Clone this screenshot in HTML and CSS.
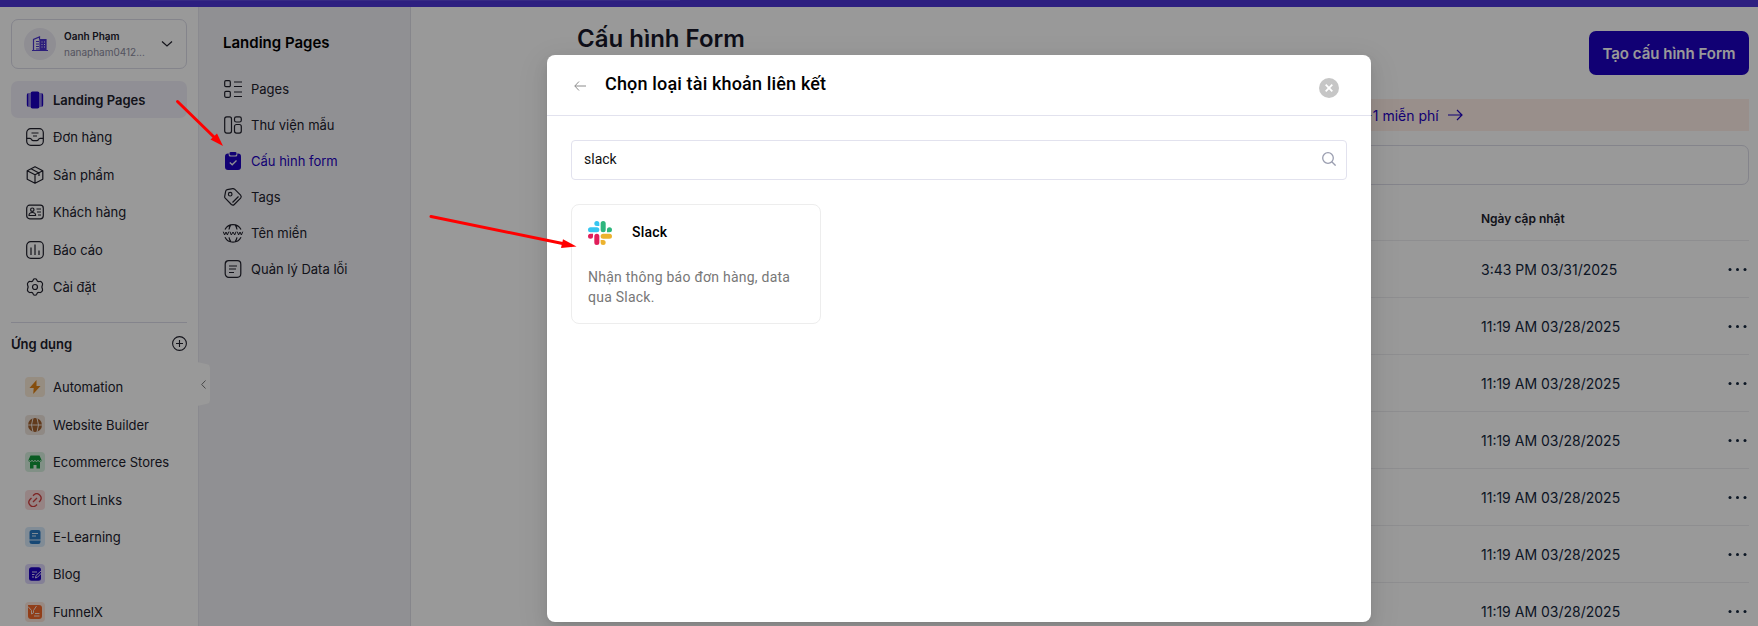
FILE: index.html
```html
<!DOCTYPE html>
<html lang="vi">
<head>
<meta charset="utf-8">
<title>Cấu hình Form</title>
<link rel="stylesheet" href="styles.css">
</head>
<body>
<div class="app">
  <div class="topbar"><div class="topbar-progress"></div></div>
  <div class="layout">
    <aside class="sidebar">
      <div class="account">
        <div class="avatar">
          <svg width="16" height="16" viewBox="0 0 16 16" fill="none" stroke="#4b35cf" stroke-width="1.2"><path d="M0 14.500h16M1.500 14.500V3.500L7.500 1v2.500M4 5.500h3M4 8h3M4 10.500h3M4 13h3"/><path d="M8 3.500h6v11H8z" fill="#4b35cf"/><path d="M9.500 6h1M12 6h1M9.500 8.500h1M12 8.500h1M9.500 11h1M12 11h1" stroke="#eeeafc"/></svg>
        </div>
        <div class="account-text"><b>Oanh Phạm</b><span>nanapham0412...</span></div>
        <svg class="chev" width="12" height="8" viewBox="0 0 12 8" fill="none" stroke="#20202c" stroke-width="1.200"><path d="M1 1.500l5 4.500 5-4.500"/></svg>
      </div>
      <nav class="menu">
        <a class="item active"><svg class="ic" viewBox="0 0 18 18" fill="#1d00c1"><rect x="4.500" y="0.500" width="9" height="17" rx="2"/><path d="M3.500 2v14C1.500 16 .8 15.200 .8 13.500v-9C.8 2.800 1.500 2 3.500 2zM14.500 2v14c2 0 2.700-.8 2.700-2.500v-9c0-1.700-.7-2.500-2.700-2.500z"/><path d="M2.700 2v14M15.300 2v14" stroke="#eeebfa" stroke-width=".5"/></svg>Landing Pages</a>
        <a class="item"><svg class="ic line" viewBox="0 0 18 18"><rect x=".7" y=".7" width="16.600" height="16.600" rx="4"/><path d="M.7 10.300h3.200c1 0 1.300.5 1.700 1.300.4.700.8 1 1.700 1h3.400c.9 0 1.300-.3 1.700-1 .4-.8.700-1.300 1.700-1.300h3.200M5.500 5h7M7 8h4"/></svg>Đơn hàng</a>
        <a class="item"><svg class="ic line" viewBox="0 0 18 18"><path d="M9 .7l7.800 4v8.600L9 17.300l-7.800-4V4.700zM1.200 4.700L9 8.800l7.800-4.100M9 8.800v8.500M5 2.800l8 4.200v3"/></svg>Sản phẩm</a>
        <a class="item"><svg class="ic line" viewBox="0 0 18 18"><rect x=".7" y="2.200" width="16.600" height="13.600" rx="3"/><circle cx="6.300" cy="6.700" r="1.700"/><path d="M3 12.500c0-2.300 1.300-3 3.300-3s3.300.7 3.300 3zM10.500 6h4.500M11 9h4M12 12h3"/></svg>Khách hàng</a>
        <a class="item"><svg class="ic line" viewBox="0 0 18 18"><rect x=".7" y=".7" width="16.600" height="16.600" rx="4"/><path d="M5 6.500V14M9 3.500V14M13 9.500V14"/></svg>Báo cáo</a>
        <a class="item"><svg class="ic line" viewBox="0 0 18 18"><path d="M7.300 1.800c.5-1.400 2.900-1.400 3.400 0 .4 1.400 1.500 2 2.900 1.700 1.500-.4 3.400 1.600 2.900 3.100-.9 1.700-.9 3.100 0 4.800.5 1.500-1.400 3.500-2.900 3.100-1.400-.3-2.500.3-2.900 1.700-.5 1.400-2.900 1.400-3.400 0-.4-1.400-1.500-2-2.900-1.700-1.500.4-3.400-1.600-2.900-3.100.9-1.700.9-3.100 0-4.800C1 5.100 2.900 3.100 4.400 3.500c1.400.3 2.500-.3 2.900-1.700z"/><circle cx="9" cy="9" r="2.500"/></svg>Cài đặt</a>
      </nav>
      <div class="apps-head"><b>Ứng dụng</b>
        <svg width="15" height="15" viewBox="0 0 15 15" fill="none" stroke="#20202c" stroke-width="1.100"><circle cx="7.500" cy="7.500" r="6.900"/><path d="M7.500 4v7M4 7.500h7"/></svg>
      </div>
      <nav class="menu apps">
        <a class="item"><span class="tile amber"><svg viewBox="0 0 14 14"><path d="M8.500 0L1.500 8h4.200L5.200 14l7.300-8H8.500z" fill="#e08214"/></svg></span>Automation</a>
        <a class="item"><span class="tile brown"><svg viewBox="0 0 14 14"><circle cx="7" cy="7" r="7" fill="#a2612f"/><path d="M0 7h14M5 0q-3 7 0 14M9 0q3 7 0 14" stroke="#efe5dd" fill="none"/></svg></span>Website Builder</a>
        <a class="item"><span class="tile green"><svg viewBox="0 0 14 14"><path d="M2.500.5h9L13.500 5c0 1-.5 2-1.500 2v6.500H8.500V10h-3v3.500H2V7C1 7 .5 6 .5 5z" fill="#119a3b"/><path d="M1 5.500q1.500 2 3 0 1.500 2 3 0 1.500 2 3 0 1.500 2 3 0" stroke="#d8f0df" fill="none"/></svg></span>Ecommerce Stores</a>
        <a class="item"><span class="tile red"><svg viewBox="0 0 14 14" fill="none" stroke="#d03e3e" stroke-width="1.300"><path d="M5 9l4-4M5 2.800l1-1C9.500-1.500 15.500 3.500 12 8l-1 1M3.500 5L2 6.500c-3.500 4 2 9.500 6 6l1-1"/></svg></span>Short Links</a>
        <a class="item"><span class="tile blue"><svg viewBox="0 0 14 14"><path d="M1.500 2.500Q1.500 0 4 0h6.500q2 0 2 2v7.500h-11zM1.500 10.500h11v1.200q0 2.300-2 2.300H4q-2.500 0-2.500-2z" fill="#2779c4"/><path d="M4 3.500h6M4 6h4" stroke="#d8eafa"/></svg></span>E-Learning</a>
        <a class="item"><span class="tile violet"><svg viewBox="0 0 14 14"><rect x="1" y=".3" width="12" height="13.500" rx="2.500" fill="#1d00c1"/><path d="M4 5h5M4 7.500h2.500M4 10h2M7.500 11l.5-2.500L13 4l1 1.500-4.500 4.700z" stroke="#dcd6fa" fill="none"/></svg></span>Blog</a>
        <a class="item"><span class="tile orange"><svg viewBox="0 0 14 14"><path d="M0 0h11q3 0 3 3v8q0 3-3 3H3q-3 0-3-3z" fill="#f2682a"/><path d="M0 1.500l3.500 4V9l2-1.200V5.500L8.500 1M7 8.500h4.500M6 11h5.500" stroke="#fde6da" fill="none"/></svg></span>FunnelX</a>
      </nav>
      <div class="collapse"><svg width="5" height="9" viewBox="0 0 5 9" fill="none" stroke="#777" stroke-width="1"><path d="M4.500.5L.7 4.500l3.800 4"/></svg></div>
    </aside>
    <aside class="panel">
      <h2>Landing Pages</h2>
      <a class="sub"><svg class="ic line" viewBox="0 0 18 18"><rect x=".7" y=".7" width="5.600" height="6" rx="1.200"/><rect x=".7" y="11.300" width="5.600" height="6" rx="1.200"/><path d="M10 2h8M10 6.500h8M10 12h8M10 16.500h8"/></svg>Pages</a>
      <a class="sub"><svg class="ic line" viewBox="0 0 18 18"><rect x=".7" y=".9" width="6.800" height="16.200" rx="2"/><rect x="10.500" y=".9" width="6.800" height="5.100" rx="1.800"/><rect x="10.500" y="8.500" width="6.800" height="8.600" rx="2"/></svg>Thư viện mẫu</a>
      <a class="sub current"><svg class="ic" viewBox="0 0 18 18"><rect x="1" y="1.500" width="16" height="16.500" rx="3" fill="#1d00c1"/><rect x="4.700" y="-.5" width="8.600" height="5" rx="1.500" fill="#f1f1f5"/><rect x="5.500" y="0" width="7" height="3.400" rx="1.300" fill="#1d00c1"/><path d="M5.800 10.500l2.400 2.300 4.300-4.300" fill="none" stroke="#f1f1f5" stroke-width="1.300"/></svg>Cấu hình form</a>
      <a class="sub"><svg class="ic line" viewBox="0 0 18 18"><path d="M3.200 1.600l5.600-1q1-.1 1.800.6l6 6q1.300 1.500 0 2.900l-6.300 6.400q-1.400 1.300-2.900 0L1.200 10.200q-.7-.8-.5-1.800l1-5.300q.3-1.200 1.500-1.500z"/><circle cx="6.200" cy="6.200" r="1.800"/><path d="M8.500 14.500l6-6"/></svg>Tags</a>
      <a class="sub"><svg class="ic line" viewBox="0 0 18 18"><path d="M1 5.500a9 9 0 0 1 16 0M1 13.300a9 9 0 0 0 16 0M6.800.9Q5.500 2.800 5 5.500M11.200.9q1.300 1.900 1.800 4.600M5 13.300q.5 2.600 1.800 4.300M13 13.300q-.5 2.600-1.800 4.300"/><path stroke-width="1" d="M-.7 7.700L.6 11 2 8l1.400 3 1.300-3.300M6 7.700L7.300 11 9 8l1.700 3L12 7.700M13.300 7.700l1.300 3.300L16 8l1.400 3 1.300-3.300"/></svg>Tên miền</a>
      <a class="sub"><svg class="ic line" viewBox="0 0 18 18"><rect x="1.200" y=".7" width="15.600" height="16.600" rx="3.500"/><path d="M5 6h8M5 9h7M5 12.500h5"/></svg>Quản lý Data lỗi</a>
    </aside>
    <main class="main">
      <header class="page-head"><h1>Cấu hình Form</h1><button class="primary">Tạo cấu hình Form</button></header>
      <div class="banner"><span>+1 miễn phí</span><svg width="15" height="12" viewBox="0 0 15 12" fill="none" stroke="#1d00c1" stroke-width="1.200"><path d="M0 6h14M9 1l5 5-5 5"/></svg></div>
      <div class="filter"></div>
      <div class="table">
        <div class="row head"><span>Ngày cập nhật</span></div>
        <div class="row"><span>3:43 PM 03/31/2025</span><i class="dots"></i></div>
        <div class="row"><span>11:19 AM 03/28/2025</span><i class="dots"></i></div>
        <div class="row"><span>11:19 AM 03/28/2025</span><i class="dots"></i></div>
        <div class="row"><span>11:19 AM 03/28/2025</span><i class="dots"></i></div>
        <div class="row"><span>11:19 AM 03/28/2025</span><i class="dots"></i></div>
        <div class="row"><span>11:19 AM 03/28/2025</span><i class="dots"></i></div>
        <div class="row"><span>11:19 AM 03/28/2025</span><i class="dots"></i></div>
      </div>
    </main>
  </div>
</div>
<div class="mask">
  <section class="modal">
    <header class="modal-head">
      <svg width="12" height="10" viewBox="0 0 12 10" fill="none" stroke="#8c8c8c" stroke-width="1"><path d="M12 5H.8M5 .5L.8 5 5 9.500"/></svg>
      <h3>Chọn loại tài khoản liên kết</h3>
      <svg class="close" width="20" height="20" viewBox="0 0 20 20"><circle cx="10" cy="10" r="10" fill="#c6c6c6"/><path d="M6.700 6.700l6.600 6.600M13.300 6.700l-6.600 6.600" stroke="#fff" stroke-width="1.800"/></svg>
    </header>
    <div class="modal-body">
      <div class="search"><span>slack</span><svg width="14" height="14" viewBox="0 0 14 14" fill="none" stroke="#9a9eb0" stroke-width="1.300"><circle cx="6" cy="6" r="5.300"/><path d="M9.800 9.800l3.800 3.800"/></svg></div>
      <article class="card">
        <div class="card-head">
          <svg width="24" height="24" viewBox="0 0 24 24"><path fill="#e01e5a" d="M5.040 15.160a2.520 2.520 0 1 1-2.520-2.520h2.520zM6.310 15.160a2.520 2.520 0 0 1 5.040 0v6.320a2.520 2.520 0 0 1-5.040 0z"/><path fill="#36c5f0" d="M8.830 5.040a2.520 2.520 0 1 1 2.520-2.520v2.520zM8.830 6.310a2.520 2.520 0 0 1 0 5.040H2.520a2.520 2.520 0 0 1 0-5.040z"/><path fill="#2eb67d" d="M18.960 8.830a2.520 2.520 0 1 1 2.520 2.520h-2.520zM17.690 8.830a2.520 2.520 0 0 1-5.040 0V2.520a2.520 2.520 0 0 1 5.040 0z"/><path fill="#ecb22e" d="M15.160 18.960a2.520 2.520 0 1 1-2.520 2.520v-2.520zM15.160 17.690a2.520 2.520 0 0 1 0-5.040h6.320a2.520 2.520 0 0 1 0 5.040z"/></svg>
          <b>Slack</b>
        </div>
        <p>Nhận thông báo đơn hàng, data qua Slack.</p>
      </article>
    </div>
  </section>
</div>
<svg class="arrows" width="1758" height="626" viewBox="0 0 1758 626" stroke="#f00" fill="#f00"><path d="M177.500 101.500L215 138" stroke-width="3" stroke-linecap="round"/><path d="M223 146l-12.500-6.500 6.500-6z" stroke="none"/><path d="M431 216.500L565 244" stroke-width="3" stroke-linecap="round"/><path d="M576.500 246.500l-15.500 1.500 2-8.800z" stroke="none"/></svg>
</body>
</html>
```
FILE: styles.css
```css
* { box-sizing: border-box; }
body { margin: 0; width: 1758px; height: 626px; overflow: hidden; background: #fff; font-family: Inter, sans-serif; color: #20202c; }
h1, h2, h3, p { margin: 0; }
.app { height: 626px; display: flex; flex-direction: column; overflow: hidden; }
.topbar { height: 7px; flex: none; background: #4c34d6; padding-left: 150px; }
.topbar-progress { width: 530px; height: 1px; background: #5c46dc; }
.layout { flex: 1; min-height: 0; display: flex; }

.sidebar { position: relative; flex: none; width: 199px; padding: 12px 11px 0; border-right: 1px solid #e6e6ee; }
.account { height: 50px; border: 1px solid #dcdce8; border-radius: 7px; display: flex; align-items: center; padding: 0 13px 0 12px; }
.avatar { width: 32px; height: 32px; border-radius: 50%; background: #efedf6; display: flex; align-items: center; justify-content: center; }
.account-text { margin-left: 8px; display: flex; flex-direction: column; line-height: 16px; }
.account-text b { font-weight: 600; font-size: 10px; }
.account-text span { color: #8c8ca0; font-size: 10px; }
.chev { margin-left: auto; }
.menu { margin-top: 12px; display: flex; flex-direction: column; gap: .6px; }
.item { height: 37px; border-radius: 7px; padding-left: 15px; display: flex; align-items: center; gap: 9px; font-size: 13px; white-space: nowrap; }
.item.active { background: #f1eff9; font-weight: 600; }
.ic { width: 18px; height: 18px; overflow: visible; flex: none; }
.line { fill: none; stroke: #20202c; stroke-width: 1.200; stroke-linejoin: round; }
.apps-head { margin-top: 16px; border-top: 1px solid #dcdcea; height: 43px; display: flex; align-items: center; justify-content: space-between; font-size: 13px; }
.apps-head b { font-weight: 600; }
.menu.apps { margin-top: 4px; gap: .4px; }
.apps .item { padding-left: 14px; gap: 8px; }
.tile { width: 20px; height: 20px; border-radius: 4px; display: flex; align-items: center; justify-content: center; }
.tile svg { width: 14px; height: 14px; }
.amber { background: #fbebd7; }
.brown { background: #efe5dd; }
.green { background: #d8f0df; }
.red { background: #fadcdc; }
.blue { background: #d8eafa; }
.violet { background: #dcd6fa; }
.orange { background: #fde6da; }
.collapse { position: absolute; left: 197px; top: 355px; width: 13px; height: 44px; background: #fff; clip-path: polygon(0 0, 9px 2px, 12px 3px, 13px 6px, 13px 38px, 12px 41px, 9px 42px, 0 44px); display: flex; align-items: center; justify-content: center; }

.panel { flex: none; width: 212px; padding: 24px 0 0 24px; background: #f1f1f5; border-right: 1px solid #e0e0e8; }
.panel h2 { font-size: 15px; font-weight: 600; line-height: 24px; margin-bottom: 16px; color: #000; }
.sub { height: 36px; display: flex; align-items: center; gap: 9px; padding-left: 1px; font-size: 13px; }
.sub.current { color: #1d00c1; }

.main { flex: 1; padding: 24px 9px 0 166px; }
.page-head { display: flex; justify-content: space-between; height: 68px; }
.page-head h1 { font-size: 24px; font-weight: 600; line-height: 30px; color: #18182a; margin-top: -7px; }
.primary { width: 160px; height: 44px; border: 0; border-radius: 7px; background: #1d00c1; color: #fff; font: 600 15px Inter, sans-serif; padding: 0; }
.banner { height: 32px; background: #ffeee8; padding-left: 786.500px; display: flex; align-items: center; gap: 9px; color: #1d00c1; font-size: 14px; }
.filter { margin-top: 14px; height: 40px; border: 1px solid #dcdce8; border-radius: 7px; }
.table { margin-top: 13px; }
.row { height: 57px; border-bottom: 1px solid #ededf1; display: flex; align-items: center; justify-content: space-between; padding: 0 3px 0 904px; font-size: 14px; color: #14263c; }
.row.head { height: 43px; font-size: 12px; font-weight: 600; color: #20202c; padding-bottom: 1px; }
.dots { width: 3px; height: 3px; border-radius: 50%; margin-right: 7.500px; background: currentColor; box-shadow: -7.500px 0 currentColor, 7.500px 0 currentColor; }

.mask { position: absolute; inset: 0; background: rgba(0,0,0,.4); padding: 55px 0 0 547px; font-family: Roboto, sans-serif; }
.modal { width: 824px; height: 567px; background: #fff; border-radius: 8px; box-shadow: 0 6px 16px rgba(0,0,0,.08), 0 3px 6px -4px rgba(0,0,0,.12), 0 9px 28px 8px rgba(0,0,0,.05); }
.modal-head { height: 61px; border-bottom: 1px solid #e2e2ee; display: flex; align-items: center; padding: 2px 32px 0 27px; }
.modal-head h3 { font-size: 18px; font-weight: 500; line-height: 24px; letter-spacing: .16px; margin: -5px 0 0 19px; color: #000; }
.close { margin: 4px 0 0 auto; }
.modal-body { padding: 24px; }
.search { height: 40px; border: 1px solid #e2e2ee; border-radius: 4px; display: flex; align-items: center; justify-content: space-between; padding: 0 10px 2px 12px; font-size: 14px; color: #111; }
.card { margin-top: 24px; width: 250px; height: 120px; border: 1px solid #ededed; border-radius: 8px; padding: 16px; }
.card-head { display: flex; align-items: center; gap: 20px; font-size: 14px; color: #000; }
.card-head b { font-weight: 500; letter-spacing: .2px; margin-top: -2px; }
.card p { margin-top: 22px; font-size: 14px; line-height: 20px; letter-spacing: .24px; color: #777; }
.arrows { position: absolute; left: 0; top: 0; }
```
